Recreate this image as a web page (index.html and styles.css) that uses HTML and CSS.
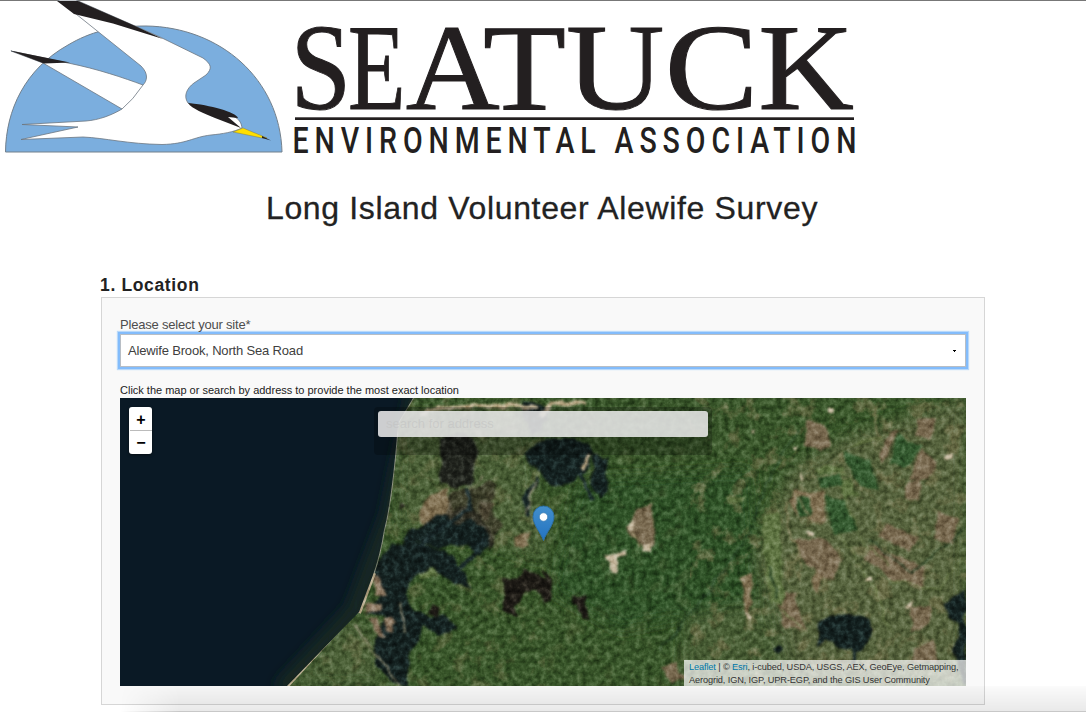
FILE: index.html
```html
<!DOCTYPE html>
<html lang="en">
<head>
<meta charset="utf-8">
<title>Long Island Volunteer Alewife Survey</title>
<link rel="stylesheet" href="styles.css">
</head>
<body>
<div class="page">
  <header class="banner">
    <svg class="logo" viewBox="0 0 870 160" width="870" height="160" role="img" aria-label="Seatuck Environmental Association">
      <path class="sun" d="M5.5 152C6 110 25 69 68 45C90 32 112 26 146 26C220 27 280 79 282 152Z"/>
      <path class="bird" d="M58 0L76 14L141 66C149 74 147 81 143 85C124 78 98 69 68 63L11 51L43 63L122 109C112 115 99 120 86 121L22 124.500L78 127L21 139.500L83 137C105 138 128 144 162 144.500C187 144 193 137 211 135C222 134 234 132 242 128C241 119 235 115 218 112L188 103C183 96 187 88 194 83L206 75C213 68 211 64 203 58L160 37L76 0Z"/>
      <path class="feather" d="M143 85Q133 100 122 109"/>
      <path class="ink" d="M57 1H78L133 25L163 39L113 23.500L74 14ZM10 50.500L70 62.500L44 63.500ZM188 103C210 105 236 112 238 118L228 117L241 128L215 118C204 113 192 109 188 103Z"/>
      <path class="beak" d="M233 132L243 128L267 138L262 138Z"/>
      <path class="ink" d="M262 136L271 140.500L262 138Z"/>
      <text class="name" y="109"><tspan x="290.4" textLength="60.7" lengthAdjust="spacingAndGlyphs">S</tspan><tspan x="347.9" textLength="57.5" lengthAdjust="spacingAndGlyphs">E</tspan><tspan x="405.7" textLength="94" lengthAdjust="spacingAndGlyphs">A</tspan><tspan x="483" textLength="83" lengthAdjust="spacingAndGlyphs">T</tspan><tspan x="566.1" textLength="98.5" lengthAdjust="spacingAndGlyphs">U</tspan><tspan x="664.8" textLength="93.7" lengthAdjust="spacingAndGlyphs">C</tspan><tspan x="758.2" textLength="95.7" lengthAdjust="spacingAndGlyphs">K</tspan></text>
      <rect class="ink" x="295" y="117.300" width="559" height="2.700"/>
      <text class="subname" transform="translate(292.500 152.700) scale(.78 1)" x="0" y="0" textLength="723">ENVIRONMENTAL ASSOCIATION</text>
    </svg>
  </header>
  <h1 class="title">Long Island Volunteer Alewife Survey</h1>
  <main class="survey">
    <h2 class="section-title">1. Location</h2>
    <section class="panel">
      <label class="label">Please select your site*</label>
      <div class="select"><span>Alewife Brook, North Sea Road</span><svg width="3" height="2" viewBox="0 0 3 2"><path d="M0 0H3V1H2V2H1V1H0Z"/></svg></div>
      <p class="hint">Click the map or search by address to provide the most exact location</p>
      <div class="map">
        <svg class="imagery" viewBox="120 398 846 288" width="846" height="288">
          <defs>
            <filter id="rough" filterUnits="userSpaceOnUse" x="100" y="380" width="890" height="330" color-interpolation-filters="sRGB">
              <feTurbulence type="fractalNoise" baseFrequency=".07" numOctaves="2" seed="8" result="n"/>
              <feDisplacementMap in="SourceGraphic" in2="n" scale="9" xChannelSelector="R" yChannelSelector="G"/>
              <feGaussianBlur stdDeviation=".8"/>
            </filter>
            <filter id="grain" filterUnits="userSpaceOnUse" x="120" y="398" width="846" height="288" color-interpolation-filters="sRGB">
              <feTurbulence type="fractalNoise" baseFrequency=".17" numOctaves="3" seed="4"/>
              <feColorMatrix values="1.2 0 0 0 -.1  1.2 0 0 0 -.1  1.2 0 0 0 -.1  0 0 0 0 1"/>
            </filter>
            <filter id="patches" filterUnits="userSpaceOnUse" x="120" y="398" width="846" height="288" color-interpolation-filters="sRGB">
              <feTurbulence type="fractalNoise" baseFrequency=".055" numOctaves="4" seed="21"/>
              <feColorMatrix values="0 0 0 0 .48  0 0 0 0 .46  0 0 0 0 .31  5 0 0 0 -2.7"/>
            </filter>
            <filter id="soft" x="-20%" y="-20%" width="140%" height="140%"><feGaussianBlur stdDeviation="7"/></filter>
            <clipPath id="land"><path d="M413 398L398 423Q392 500 384 530Q380 555 373 575L359 612L287 686H966V398Z"/></clipPath>
            <clipPath id="east"><rect x="690" y="398" width="276" height="288"/></clipPath>
            <clipPath id="west"><rect x="285" y="398" width="260" height="288"/></clipPath>
          </defs>
          <rect x="120" y="398" width="846" height="288" fill="#0a1925"/>
          <path d="M416 390L390 515L354 610L280 690" fill="none" stroke="#1b2d20" stroke-width="12" filter="url(#soft)"/>
          <g clip-path="url(#land)">
            <rect x="280" y="398" width="686" height="288" fill="#385529"/>
            <g filter="url(#soft)">
              <path fill="#56643c" d="M790 470L840 440L966 398V686H790L755 560Z"/>
              <path fill="#4d603a" opacity=".8" d="M398 410H530L545 560L480 540L395 530ZM345 610L385 640L380 686H290ZM690 600L780 580L800 686H680Z"/>
              <path fill="#2d5128" d="M580 480L750 470L760 600L620 630L550 590Z"/>
            </g>
            <g clip-path="url(#east)" opacity=".45"><rect x="120" y="398" width="846" height="288" filter="url(#patches)"/></g>
            <g clip-path="url(#west)" opacity=".25"><rect x="120" y="398" width="846" height="288" filter="url(#patches)"/></g>
            <rect x="120" y="398" width="846" height="288" filter="url(#patches)" opacity=".15"/>
            <g filter="url(#rough)">
              <g fill="#796a50">
                <path d="M805 420L824 424L832 446L820 450L804 447ZM918 418L934 420L930 439L917 437ZM889 433L899 430L884 463L878 454ZM922 450L938 464L930 480L909 478ZM909 480L921 478L919 502L905 496ZM939 512L958 518L952 545L936 540ZM885 524L919 538L910 550L880 538Z"/>
                <path d="M795 540L825 538L842 560L833 580L806 566ZM868 545L925 566L920 589L892 580L865 558ZM910 605L930 605L932 622L912 634ZM775 592L794 594L806 630L785 629ZM913 648L932 641L940 664L912 660ZM662 666L676 664L684 680L672 684ZM640 508L652 504L654 548L642 546L626 528Z"/>
              </g>
              <g fill="#827254">
                <path d="M795 490L824 492L826 521L797 518L790 500ZM816 571L825 574L818 594L812 588ZM430 494L448 489L453 515L431 531L417 519ZM480 500L494 506L488 520L479 515ZM514 536L531 532L527 545L515 548ZM741 577L752 575L753 604L747 619Z"/>
              </g>
              <g fill="#607543">
                <path d="M762 518L778 510L784 606L770 602ZM814 468L842 466L846 475L824 480ZM840 480L852 477L858 495L845 499ZM728 496L744 496L743 502L728 503ZM485 405L510 402L518 420L490 435ZM417 560L435 556L440 573L420 578Z"/>
              </g>
              <g fill="#34592f">
                <path d="M898 434L922 448L905 468L889 463ZM842 450L869 461L879 490L858 486ZM797 497L811 495L811 518L798 517ZM816 475L840 472L842 487L820 488ZM824 495L844 500L858 530L834 535Z"/>
              </g>
              <g fill="none" stroke="#988e69" stroke-width="1.300">
                <path d="M788 500Q785 530 798 545L801 580M796 492L811 520M814 478L845 472M872 406L878 440M632 520L639 545"/>
                <path stroke="#6c7d4a" d="M845 498L865 545L890 565M852 445L880 438M890 580L940 590L966 550M840 535L875 590L890 630M775 605L805 630"/>
                <path stroke="#29452a" d="M798 430Q770 470 760 505L742 545L690 615L660 650M770 565L776 600M870 540L911 573L966 530"/>
              </g>
              <g fill="#142120">
                <path fill="#20231d" d="M440 438Q458 426 474 438Q479 464 471 486L456 489L440 482Z"/>
                <path d="M535 443Q560 433 584 442L594 454L585 474L572 483L552 487L540 470L528 465L524 451ZM594 455L608 458L606 480L609 491L600 498L592 484ZM521 400L551 405L542 429L531 433L525 420Z"/>
                <path d="M469 503L489 526L494 544L481 555L465 545L440 550L417 541L399 548L411 530L434 518L453 511ZM391 545L416 541L455 557L471 590L447 580L430 570L415 575L405 595L412 607L430 618L443 614L458 629L439 635L422 625L417 646L407 657L407 686L394 684L376 664V638L387 616L365 613L380 596L373 569Z"/>
                <path d="M819 621Q835 615 849 614Q863 614 872 624Q871 644 856 651L836 648L825 638L817 650ZM966 590L944 603L950 617L960 625L954 647L961 682L966 685ZM775 644L783 648L780 656L772 651ZM380 558L400 552L390 580Z"/>
              </g>
              <g fill="#1e1b16">
                <path d="M503 578L519 577L525 570L538 574L544 582L541 570L550 578L552 600L546 603L534 589L522 593L516 607L518 617L505 613L501 610L506 596ZM574 595L585 595L590 618L581 617L578 605L573 602Z"/>
                <path d="M434 602L441 606L437 618L428 613ZM399 503L407 507L401 511Z"/>
              </g>
              <path fill="#3d3a2b" opacity=".8" d="M452 491L470 490L489 480L497 485L490 502L502 526L490 550L485 528L470 518L455 525L445 512Z"/>
              <path fill="none" stroke="#1a292a" stroke-width="4" d="M467 490L472 508L440 528L418 548M538 475L526 499L528 517M593 500L580 475M485 540L470 560L455 570M853 650L853 665"/>
              <g fill="#c6b9a0">
                <path d="M603 557L625 549L627 556L618 558L619 573L612 574L610 564ZM642 544L653 544L652 551L643 550ZM747 611L753 616L748 620ZM800 471L804 475L800 480ZM867 577H873V580H867ZM945 455H953V459H945ZM808 533H813V537H808ZM628 524L634 519L635 530L628 529ZM905 604L913 599L912 604L906 609Z"/>
                <path fill="#8a765f" d="M373 575L379 577L385 596L374 593ZM366 604L382 604L380 612L365 611ZM370 618L378 617L384 636L375 634ZM385 617L395 623L391 632L386 630Z"/>
                <path d="M828 409H835V413H828ZM752 430H756V434H752ZM794 448H798V452H794Z"/>
              </g>
              <path fill="none" stroke="#c3b393" stroke-width="4" d="M420 413L440 408L477 405L538 407M545 405L562 402L585 404M540 418L552 402M590 455L582 470"/>
              <path fill="none" stroke="#8d8a70" stroke-width="1.500" d="M535 479L525 515M355 625L365 640L386 665L400 686M400 602L404 632M483 475L470 490"/>
            </g>
            <path d="M413 398L398 423Q392 500 384 530Q380 555 373 575" fill="none" stroke="#858b78" stroke-width="2"/>
            <path d="M287 686L353 614M374 573L359 613" fill="none" stroke="#b8ab8d" stroke-width="4"/>
            <rect class="texture" x="120" y="398" width="846" height="288" filter="url(#grain)"/>
          </g>
        </svg>
        <div class="zoom-control"><span>+</span><span>−</span></div>
        <div class="search-box"><div class="search-input">search for address</div></div>
        <svg class="marker" width="25" height="37" viewBox="0 0 25 37">
          <defs><linearGradient id="pin" x2="0" y2="1"><stop stop-color="#438fcd"/><stop offset="1" stop-color="#2373c0"/></linearGradient></defs>
          <path d="M12.500 35.500C10 28 2 20 2 11.500A10.500 10.500 0 0 1 23 11.500C23 20 15 28 12.500 35.500Z" fill="url(#pin)" stroke="#2e70a4"/>
          <circle cx="12.500" cy="12" r="4.200" fill="#fff" stroke="#3274a8" stroke-width=".6"/>
        </svg>
        <div class="attribution"><div><a>Leaflet</a> | © <a>Esri</a>, i-cubed, USDA, USGS, AEX, GeoEye, Getmapping,</div><div>Aerogrid, IGN, IGP, UPR-EGP, and the GIS User Community</div></div>
      </div>
    </section>
  </main>
  <div class="bottom-shade"></div>
</div>
</body>
</html>
```
FILE: styles.css
```css
* { box-sizing: border-box; }
body {
  margin: 0;
  background: #fff;
  color: #222;
  font-family: "Liberation Sans", Helvetica, Arial, sans-serif;
}
.page {
  position: relative;
  height: 712px;
  overflow: hidden;
  box-shadow: inset 0 1px #777;
}
.banner { height: 160px; }
.logo { display: block; }
.sun { fill: #7baede; stroke: #73808c; }
.bird { fill: #fff; stroke: #6c7680; stroke-width: .8; }
.feather { fill: none; stroke: #6c7680; stroke-width: .8; }
.ink { fill: #231f20; }
.beak { fill: #ffdf00; stroke: #756c3a; stroke-width: .4; }
.name { font: 123px "Liberation Serif", serif; fill: #231f20; stroke: #231f20; stroke-width: 1; }
.subname { font: 500 36.6px Roboto, sans-serif; fill: #231f20; }
.title {
  margin: 0 2px 0 0;
  padding-top: 29px;
  font-size: 32px;
  font-weight: 400;
  line-height: 38px;
  letter-spacing: .66px;
  text-align: center;
  -webkit-text-stroke: .3px #222;
}
.survey { width: 884px; margin: 46px 0 0 101px; }
.section-title {
  margin: 0 0 0 -1px;
  font-size: 17.5px;
  line-height: 24px;
  letter-spacing: .65px;
}
.panel {
  height: 408px;
  padding: 19px 18px 0;
  background: #f9f9f9;
  border: 1px solid #d6d6d6;
}
.label {
  display: block;
  font-size: 13px;
  line-height: 16px;
  letter-spacing: -.2px;
  color: #4d4d4d;
}
.select {
  display: flex;
  align-items: center;
  justify-content: space-between;
  height: 33px;
  margin-top: 1px;
  padding: 0 9px 0 7px;
  background: #fff;
  border: 1px solid #b8bec5;
  box-shadow: 0 0 0 2px #83bcfb, 0 0 1px 3px #b9d9fa;
  font-size: 13px;
  letter-spacing: -.17px;
  color: #404040;
}
.hint {
  margin: 16px 0 0;
  font-size: 11px;
  line-height: 15px;
  letter-spacing: -.005px;
  white-space: nowrap;
}
.map { position: relative; height: 288px; width: 846px; overflow: hidden; }
.imagery { display: block; }
.texture { mix-blend-mode: soft-light; opacity: .72; }
.zoom-control {
  position: absolute;
  left: 9px;
  top: 9px;
  width: 23px;
  padding-left: 1px;
  background: #fff;
  border-radius: 3px;
  box-shadow: 0 1px 3px rgba(0,0,0,.5);
  color: #000;
  font-weight: 700;
  font-size: 16px;
  text-align: center;
}
.zoom-control span { display: block; height: 24px; line-height: 25px; }
.zoom-control span:first-child { height: 23px; box-shadow: 0 1px #bbb; }
.search-box {
  position: absolute;
  left: 254px;
  top: 9px;
  width: 338px;
  height: 48px;
  padding: 4px;
  border-radius: 4px;
  background: rgba(0,0,0,.24);
}
.search-input {
  height: 26px;
  padding-left: 8px;
  border-radius: 3px;
  background: rgba(238,238,238,.86);
  color: rgba(190,190,190,.5);
  font-size: 13px;
  line-height: 26px;
}
.marker { position: absolute; left: 411px; top: 107px; }
.attribution {
  position: absolute;
  right: 0;
  bottom: 0;
  width: 282px;
  height: 26px;
  padding: 1px 0 0 5px;
  background: rgba(255,255,255,.7);
  color: #333;
  font-size: 9.2px;
  line-height: 13px;
  letter-spacing: -.11px;
  white-space: nowrap;
}
.attribution a { color: #0078a8; }
.bottom-shade {
  position: absolute;
  left: 120px;
  right: 0;
  bottom: 0;
  height: 26px;
  background: linear-gradient(rgba(0,0,0,.015), rgba(0,0,0,.085));
  border-bottom: 1px solid #c8c8c8;
  -webkit-mask-image: linear-gradient(90deg, transparent, #000 60px);
  mask-image: linear-gradient(90deg, transparent, #000 60px);
}
```
